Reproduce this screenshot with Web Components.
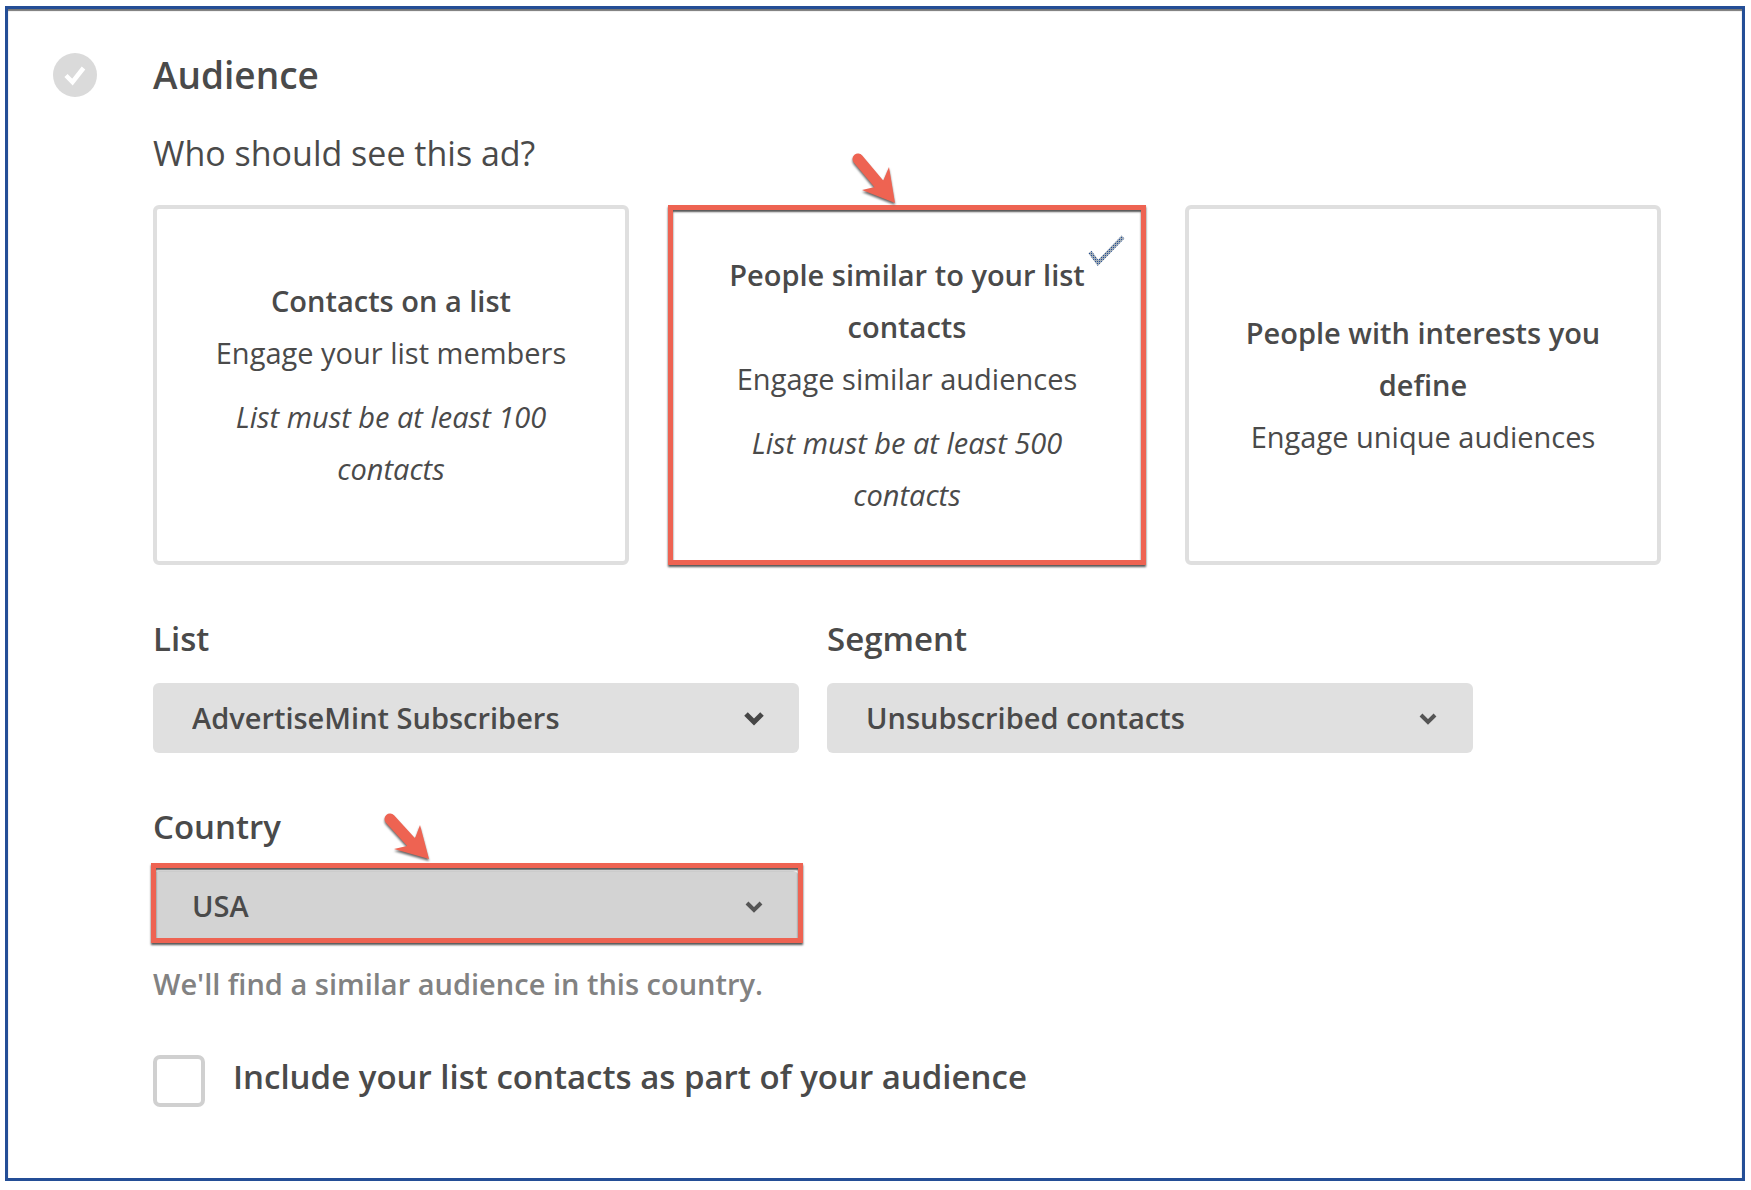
<!DOCTYPE html>
<html lang="en">
<head>
<meta charset="utf-8">
<title>Audience</title>
<style>
  body {
    margin: 6px 6px 9px 5px;
    background: #fff;
    color: #4a4a4a;
    font-family: "Open Sans", "Noto Sans", sans-serif;
    --accent: #ee6352;
    --line: #dfdfdf;
    --size-s: 29px;
    --size-m: 33px;
    --size-q: 34px;
    --size-l: 37px;
  }
</style>
</head>
<body>
<audience-panel heading="Audience">
  <card-group question="Who should see this ad?">
    <audience-card name="Contacts on a list" detail="Engage your list members" note="List must be at least 100 contacts"></audience-card>
    <audience-card selected name="People similar to your list contacts" detail="Engage similar audiences" note="List must be at least 500 contacts">
      <pointer-arrow shape="steep"></pointer-arrow>
    </audience-card>
    <audience-card name="People with interests you define" detail="Engage unique audiences"></audience-card>
  </card-group>
  <field-grid>
    <select-field label="List" value="AdvertiseMint Subscribers" chevron="large"></select-field>
    <select-field label="Segment" value="Unsubscribed contacts"></select-field>
    <select-field label="Country" value="USA" marked hint="We'll find a similar audience in this country.">
      <pointer-arrow shape="even"></pointer-arrow>
    </select-field>
  </field-grid>
  <check-field label="Include your list contacts as part of your audience"></check-field>
</audience-panel>

<script>
class BaseElement extends HTMLElement {
  connectedCallback() {
    if (this.shadowRoot) return;
    this.attachShadow({ mode: "open" }).innerHTML =
      "<style>*{box-sizing:border-box}</style>" + this.view();
  }
  attr(name) { return this.getAttribute(name) || ""; }
}

customElements.define("audience-panel", class extends BaseElement {
  view() {
    return `<style>
      :host { display: block; }
      section { display: flex; gap: 56px; padding: 40px 81px 71px 45px;
        border: 3px solid #244e96;
        box-shadow: 0 2px 1px #777, inset 0 2px 1px #777, 0 1px 1px 1px #bbb; }
      .status { flex: none; height: 52px; display: flex; align-items: center; }
      .status svg { display: block; width: 44px; height: 44px; }
      .body { flex: 1; min-width: 0; }
      h1 { margin: 0 0 27px; font-size: var(--size-l); line-height: 52px; font-weight: 600; }
    </style>
    <section>
      <div class="status"><svg viewBox="0 0 44 44" aria-hidden="true">
        <circle cx="22" cy="22" r="22" fill="#dadada"/>
        <path d="M13 22.5l6.5 6.5L30.5 15" fill="none" stroke="#fff" stroke-width="4.5"/>
      </svg></div>
      <div class="body"><h1>${this.attr("heading")}</h1><slot></slot></div>
    </section>`;
  }
});

customElements.define("card-group", class extends BaseElement {
  view() {
    return `<style>
      :host { display: block; margin-bottom: 49px; }
      h2 { margin: 0 0 27px; font-size: var(--size-q); line-height: 50px; font-weight: 400; }
      .cards { display: grid; grid-template-columns: repeat(3, 1fr); gap: 40px; }
    </style>
    <h2>${this.attr("question")}</h2>
    <div class="cards"><slot></slot></div>`;
  }
});

customElements.define("audience-card", class extends BaseElement {
  view() {
    const selected = this.hasAttribute("selected");
    const note = this.attr("note");
    return `<style>
      :host { display: grid; position: relative; }
      button { display: flex; flex-direction: column; justify-content: center; align-items: center;
        min-height: 360px; padding: 40px 48px; margin: 0;
        border: 4px solid var(--line); border-radius: 6px; background: #fff;
        font: 400 var(--size-s)/52px "Open Sans", "Noto Sans", sans-serif; color: inherit; text-align: center; }
      :host([selected]) button { margin: 0 -1px; border: 5px solid var(--accent); border-radius: 0; padding: 39px 47px;
        box-shadow: 0 2px 2px #555, inset 0 2px 2px #555; }
      strong { font-weight: 600; }
      em { margin-top: 12px; }
      .tick { position: absolute; top: 28px; right: 18px; width: 40px; height: 36px; }
      ::slotted(pointer-arrow) { position: absolute; left: 181px; top: -55px; }
    </style>
    <button type="button" aria-pressed="${selected}">
      <strong>${this.attr("name")}</strong>
      <span>${this.attr("detail")}</span>
      ${note ? `<em>${note}</em>` : ""}
    </button>
    ${selected ? `<svg class="tick" viewBox="0 0 40 36" aria-hidden="true">
      <defs><pattern id="dots" width="2" height="2" patternUnits="userSpaceOnUse">
        <rect width="2" height="2" fill="#a3adb5"/><rect width="1" height="1" fill="#244e96"/>
      </pattern></defs>
      <path d="M3 19l8 11L36 4" fill="none" stroke="url(#dots)" stroke-width="4"/></svg>` : ""}
    <slot></slot>`;
  }
});

customElements.define("field-grid", class extends BaseElement {
  view() {
    return `<style>
      :host { display: grid; grid-template-columns: 1fr 1fr; gap: 49px 28px; max-width: 1320px; margin-bottom: 42px; }
    </style><slot></slot>`;
  }
});

customElements.define("select-field", class extends BaseElement {
  view() {
    const large = this.attr("chevron") === "large";
    const hint = this.attr("hint");
    return `<style>
      :host { display: block; position: relative; }
      label { display: block; margin-bottom: 19px; font-size: var(--size-m); line-height: 50px; font-weight: 600; }
      .control { display: grid; position: relative; align-items: center; }
      .control > select, .control > svg { grid-area: 1 / 1; }
      select { appearance: none; width: 100%; height: 70px; margin: 0; padding: 0 80px 0 39px;
        border: 0; border-radius: 6px; background: #e0e0e0; color: inherit;
        font: 600 var(--size-s)/52px "Open Sans", "Noto Sans", sans-serif; }
      svg { justify-self: end; margin-right: 35px; width: 20px; height: 16px; pointer-events: none; }
      :host([marked]) select { background: #d3d3d3; }
      .mark { position: absolute; inset: -8px -4px -2px -2px; border: 5px solid var(--accent);
        box-shadow: 0 2px 2px #555, inset 0 2px 2px #555; pointer-events: none; }
      p { margin: 17px 0 0; font-size: var(--size-s); line-height: 52px; font-weight: 600; color: #828282; }
      ::slotted(pointer-arrow) { position: absolute; left: 223px; top: 5px; }
    </style>
    <label for="field">${this.attr("label")}</label>
    <div class="control">
      <select id="field"><option>${this.attr("value")}</option></select>
      <svg viewBox="0 0 20 16" aria-hidden="true"><path d="${large ? "M2 4l8 8 8-8" : "M3 5l7 7 7-7"}"
        fill="none" stroke="${large ? "#464646" : "#555"}" stroke-width="${large ? 5 : 4}"/></svg>
      ${this.hasAttribute("marked") ? `<div class="mark"></div>` : ""}
    </div>
    ${hint ? `<p>${hint}</p>` : ""}
    <slot></slot>`;
  }
});

customElements.define("check-field", class extends BaseElement {
  view() {
    return `<style>
      :host { display: block; }
      div { display: flex; align-items: flex-start; gap: 28px; }
      input { appearance: none; flex: none; width: 52px; height: 52px; margin: 3px 0 0;
        border: 4px solid #d0d0d0; border-radius: 7px; background: #fff; }
      label { font-size: var(--size-m); line-height: 50px; font-weight: 600; }
    </style>
    <div><input type="checkbox" id="box"><label for="box">${this.attr("label")}</label></div>`;
  }
});

customElements.define("pointer-arrow", class extends BaseElement {
  view() {
    const steep = this.attr("shape") === "steep";
    const tail = steep ? "M8 9L29 34" : "M14 12L35 35";
    const head = steep ? "M45 53L39 17 33.5 30 25 37 12 40z" : "M53 52L44 18 39.5 30 31 39 18 42z";
    return `<style>
      :host { display: block; width: 60px; height: 60px; pointer-events: none; }
      svg { display: block; filter: drop-shadow(0 2px 1px #666); }
    </style>
    <svg width="60" height="60" viewBox="0 0 60 60" aria-hidden="true">
      <path d="${tail}" stroke="#ee6352" stroke-width="11" stroke-linecap="round"/>
      <path d="${head}" fill="#ee6352"/>
    </svg>`;
  }
});
</script>
</body>
</html>
